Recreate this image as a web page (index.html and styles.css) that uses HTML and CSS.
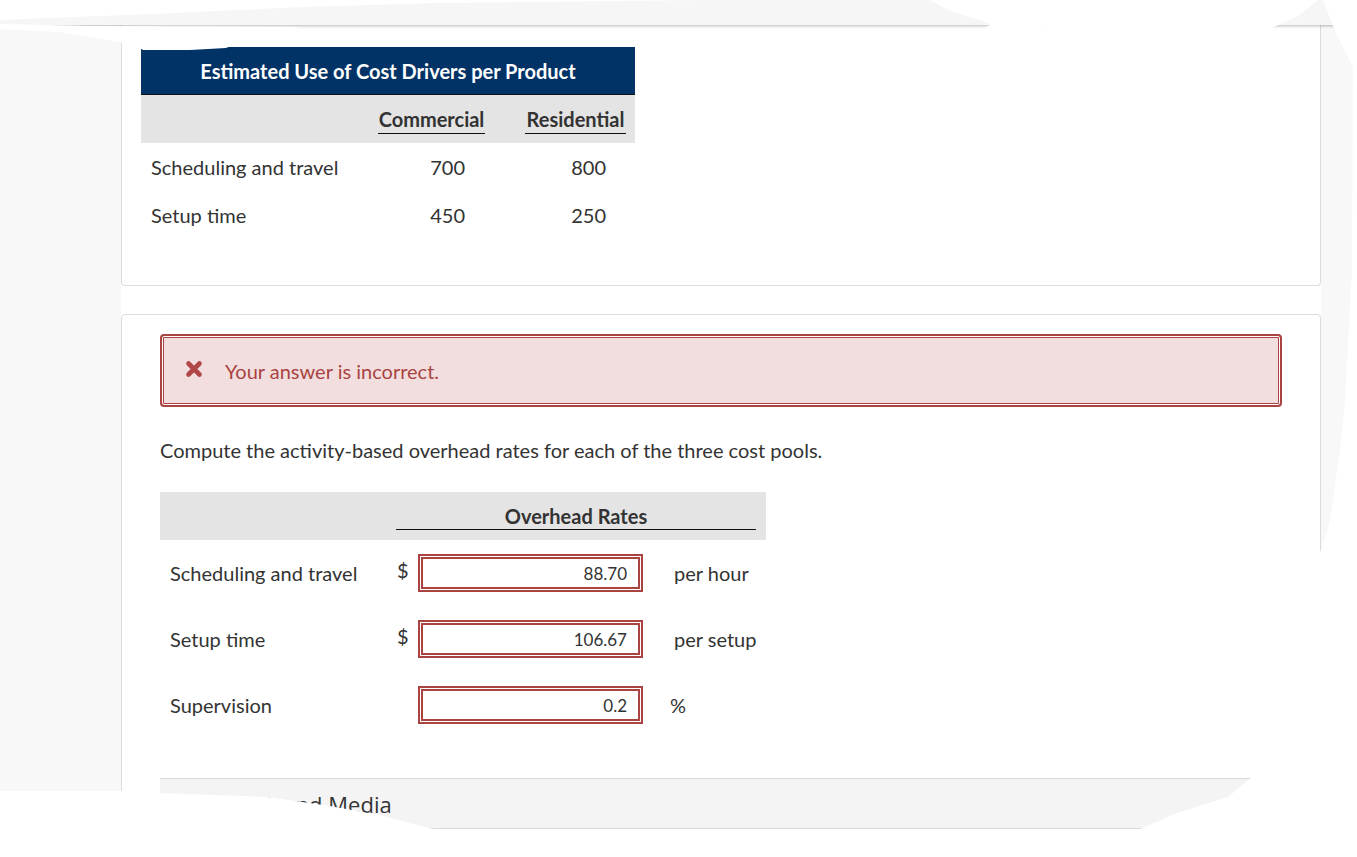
FILE: index.html
```html
<!DOCTYPE html>
<html lang="en">
<head>
<meta charset="utf-8">
<title>Activity-based overhead rates</title>
<link rel="stylesheet" href="styles.css">
</head>
<body>
<div class="topbar"></div>
<div class="page">
  <aside class="gutter"></aside>
  <main class="main">
    <section class="card card-top">
      <div class="drivers">
        <div class="drivers-title">Estimated Use of Cost Drivers per Product</div>
        <div class="drivers-row drivers-head">
          <span></span>
          <span class="colhead"><span class="ul">Commercial</span></span>
          <span></span>
          <span class="colhead"><span class="ul">Residential</span></span>
        </div>
        <div class="drivers-row">
          <span class="label">Scheduling and travel</span>
          <span class="num">700</span>
          <span></span>
          <span class="num">800</span>
        </div>
        <div class="drivers-row">
          <span class="label">Setup time</span>
          <span class="num">450</span>
          <span></span>
          <span class="num">250</span>
        </div>
      </div>
    </section>

    <section class="card card-answer">
      <div class="alert">
        <svg class="alert-icon" width="18" height="18" viewBox="0 0 18 18" aria-hidden="true">
          <path d="M3.5 3.5 L14.5 14.5 M14.5 3.5 L3.5 14.5" stroke="#b04646" stroke-width="4.6" stroke-linecap="round" fill="none"/>
        </svg>
        <span class="alert-text">Your answer is incorrect.</span>
      </div>

      <p class="prompt">Compute the activity-based overhead rates for each of the three cost pools.</p>

      <div class="rates">
        <div class="rates-head">
          <span></span>
          <span class="rates-title">Overhead Rates</span>
        </div>
        <div class="rates-row">
          <span class="label">Scheduling and travel</span>
          <span class="cur">$</span>
          <span class="field">88.70</span>
          <span class="unit">per hour</span>
        </div>
        <div class="rates-row">
          <span class="label">Setup time</span>
          <span class="cur">$</span>
          <span class="field">106.67</span>
          <span class="unit">per setup</span>
        </div>
        <div class="rates-row">
          <span class="label">Supervision</span>
          <span class="cur"></span>
          <span class="field">0.2</span>
          <span class="unit unit-pct">%</span>
        </div>
      </div>

      <div class="media">eTextbook and Media</div>
    </section>
  </main>
  <aside class="gutter gutter-right"></aside>
</div>

<svg class="tear" width="1357" height="857" viewBox="0 0 1357 857" aria-hidden="true">
  <path fill="#ffffff" d="M0 0 L700 0 L434 3 L303 7 L150 14 L0 20 Z"/>
  <path fill="#ffffff" d="M0 24 L90 26 L300 27 L262 36 L236 44 L226 48 L190 50 L143 50 L138 47 L120 42 L60 32 L0 29 Z"/>
  <path fill="#ffffff" d="M930 0 L948 10 L991 24 L978 33 L1047 28 L1112 37 L1263 32 L1300 15 L1318 0 Z"/>
  <path fill="#ffffff" d="M1323 0 L1357 0 L1357 857 L1316 857 L1316 560 L1322 548 L1330 520 L1340 450 L1345 400 L1352 270 L1353 67 L1336 33 L1328 13 Z"/>
  <path fill="#ffffff" d="M0 791 L121 791 L160 793 L268 797 L330 806 L379 815 L437 830 L1138 830 L1177 813 L1228 797 L1252 777 L1257 775 L1357 775 L1357 857 L0 857 Z"/>
</svg>
</body>
</html>
```

FILE: styles.css
```css
html, body {
  margin: 0;
  padding: 0;
}

body {
  width: 1357px;
  height: 857px;
  overflow: hidden;
  position: relative;
  background: #ffffff;
  font-family: "Lato", "Noto Sans", sans-serif;
  font-size: 20px;
  color: #333333;
}

.topbar {
  height: 25px;
  background: #f6f6f6;
  box-shadow: 0 1px 3px rgba(0, 0, 0, 0.28);
  position: relative;
  z-index: 1;
}

.page {
  display: flex;
  align-items: stretch;
  height: 832px;
}

.gutter {
  width: 121px;
  flex: none;
  background: #f8f8f8;
}

.gutter-right {
  width: 36px;
}

.main {
  width: 1200px;
  flex: none;
  background: #ffffff;
}

.card {
  border: 1px solid #dcdcdc;
  border-radius: 4px;
  background: #ffffff;
}

/* ---------- first card: cost drivers ---------- */
.card-top {
  border-top: none;
  border-radius: 0 0 4px 4px;
  padding: 22px 0 46px 19px;
}

.drivers {
  width: 494px;
}

.drivers-title {
  height: 47px;
  background: #023366;
  border-bottom: 1px solid #111;
  color: #ffffff;
  font-weight: 700;
  font-size: 20px;
  display: flex;
  align-items: center;
  justify-content: center;
}

.drivers-row {
  display: grid;
  grid-template-columns: 237px 107px 40px 101px;
  height: 48px;
  align-items: center;
}

.drivers-head {
  background: #e4e4e4;
}

.colhead {
  font-weight: 700;
  text-align: center;
  align-self: end;
  padding-bottom: 9px;
}

.ul {
  display: block;
  border-bottom: 1px solid #111;
  padding-bottom: 3px;
  line-height: 22px;
}

.label {
  padding-left: 10px;
}

.num {
  text-align: right;
  padding-right: 20px;
}

/* ---------- second card: answer ---------- */
.card-answer {
  box-sizing: border-box;
  margin-top: 28px;
  padding: 19px 38px 0 38px;
  height: 542px;
  overflow: hidden;
}

.alert {
  height: 69px;
  border: 2px solid #a94442;
  border-radius: 4px;
  box-shadow: inset 0 0 0 1px #ffffff, inset 0 0 0 2px #a94442;
  background: #f2dede;
  display: flex;
  align-items: center;
  padding-left: 23px;
  gap: 22px;
}

.alert-icon {
  flex: none;
  margin-top: -3px;
}

.alert-text {
  color: #a94442;
}

.prompt {
  margin: 32px 0 0 0;
  line-height: 22px;
}

.rates {
  width: 606px;
  margin-top: 31px;
}

.rates-head {
  display: grid;
  grid-template-columns: 236px 1fr;
  height: 48px;
  background: #e4e4e4;
}

.rates-title {
  align-self: end;
  margin: 0 10px 10px 0;
  border-bottom: 1px solid #111;
  text-align: center;
  font-weight: 700;
  line-height: 22px;
  padding-bottom: 2px;
}

.rates-row {
  display: grid;
  grid-template-columns: 236px 22px 225px 1fr;
  height: 66px;
  align-items: center;
}

.cur {
  padding-left: 1px;
  margin-top: -6px;
}

.field {
  box-sizing: border-box;
  height: 38px;
  border: 2px solid #a94442;
  box-shadow: inset 0 0 0 1px #ffffff, inset 0 0 0 3px #a94442;
  display: flex;
  align-items: center;
  justify-content: flex-end;
  padding-right: 14px;
  font-size: 17px;
}

.unit {
  padding-left: 31px;
}

.unit-pct {
  padding-left: 27px;
}

.media {
  box-sizing: border-box;
  margin: 40px -39px 0 0;
  height: 51px;
  background: #f4f4f4;
  border-top: 1px solid #d9d9d9;
  border-bottom: 1px solid #d9d9d9;
  display: flex;
  align-items: center;
  padding: 0 0 0 10px;
  font-family: "Open Sans", "Noto Sans", sans-serif;
  font-size: 22px;
  color: #333;
}

/* decorative torn-paper edges laid over the page */
.tear {
  position: absolute;
  top: 0;
  left: 0;
  pointer-events: none;
  z-index: 2;
}
```
